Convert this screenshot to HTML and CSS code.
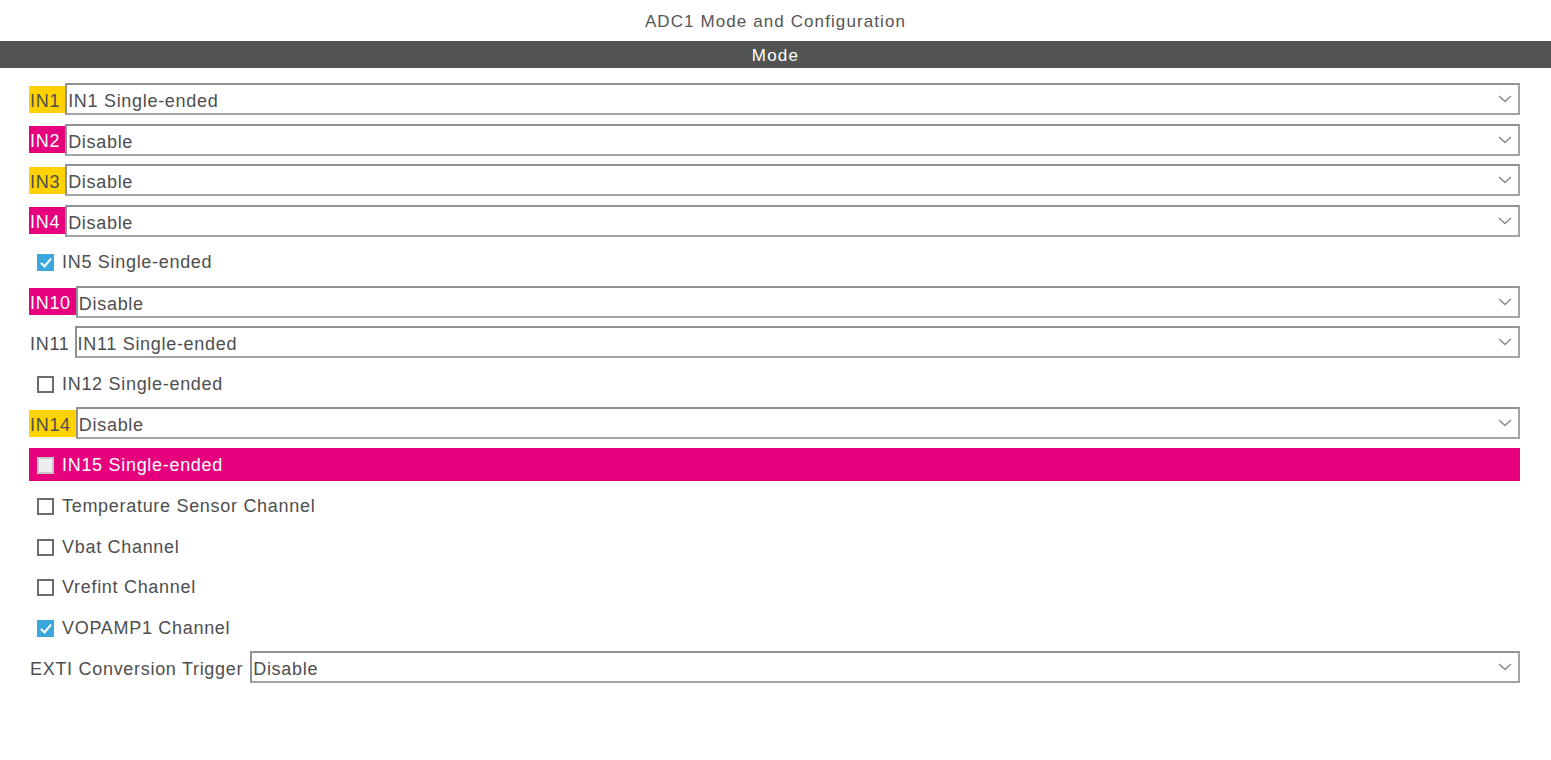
FILE: index.html
```html
<!DOCTYPE html>
<html>
<head>
<meta charset="utf-8">
<link rel="stylesheet" href="styles.css">
</head>
<body>
<div class="title">ADC1 Mode and Configuration</div>
<div class="bar">Mode</div>
<div class="rows">
  <div class="row"><span class="lbl yellow">IN1</span><div class="select">IN1 Single-ended<svg class="chev" width="14" height="8" viewBox="0 0 14 8"><polyline points="1,1 7,6.5 13,1" fill="none" stroke="#8c8c8c" stroke-width="1.6"/></svg></div></div>
  <div class="row"><span class="lbl pink">IN2</span><div class="select">Disable<svg class="chev" width="14" height="8" viewBox="0 0 14 8"><polyline points="1,1 7,6.5 13,1" fill="none" stroke="#8c8c8c" stroke-width="1.6"/></svg></div></div>
  <div class="row"><span class="lbl yellow">IN3</span><div class="select">Disable<svg class="chev" width="14" height="8" viewBox="0 0 14 8"><polyline points="1,1 7,6.5 13,1" fill="none" stroke="#8c8c8c" stroke-width="1.6"/></svg></div></div>
  <div class="row"><span class="lbl pink">IN4</span><div class="select">Disable<svg class="chev" width="14" height="8" viewBox="0 0 14 8"><polyline points="1,1 7,6.5 13,1" fill="none" stroke="#8c8c8c" stroke-width="1.6"/></svg></div></div>
  <div class="row check"><span class="box checked"></span>IN5 Single-ended</div>
  <div class="row"><span class="lbl pink">IN10</span><div class="select">Disable<svg class="chev" width="14" height="8" viewBox="0 0 14 8"><polyline points="1,1 7,6.5 13,1" fill="none" stroke="#8c8c8c" stroke-width="1.6"/></svg></div></div>
  <div class="row"><span class="lbl">IN11</span><div class="select">IN11 Single-ended<svg class="chev" width="14" height="8" viewBox="0 0 14 8"><polyline points="1,1 7,6.5 13,1" fill="none" stroke="#8c8c8c" stroke-width="1.6"/></svg></div></div>
  <div class="row check"><span class="box"></span>IN12 Single-ended</div>
  <div class="row"><span class="lbl yellow">IN14</span><div class="select">Disable<svg class="chev" width="14" height="8" viewBox="0 0 14 8"><polyline points="1,1 7,6.5 13,1" fill="none" stroke="#8c8c8c" stroke-width="1.6"/></svg></div></div>
  <div class="row check hl"><span class="box grey"></span>IN15 Single-ended</div>
  <div class="row check"><span class="box"></span>Temperature Sensor Channel</div>
  <div class="row check"><span class="box"></span>Vbat Channel</div>
  <div class="row check"><span class="box"></span>Vrefint Channel</div>
  <div class="row check"><span class="box checked"></span>VOPAMP1 Channel</div>
  <div class="row"><span class="lbl wide">EXTI Conversion Trigger</span><div class="select">Disable<svg class="chev" width="14" height="8" viewBox="0 0 14 8"><polyline points="1,1 7,6.5 13,1" fill="none" stroke="#8c8c8c" stroke-width="1.6"/></svg></div></div>
</div>
</body>
</html>
```
FILE: styles.css
```css
html, body {
  margin: 0;
  padding: 0;
  background: #ffffff;
}
body {
  font-family: "Liberation Sans", Arial, sans-serif;
  color: #4e4e4e;
  width: 1551px;
  height: 760px;
  overflow: hidden;
}
.title {
  height: 41px;
  box-sizing: border-box;
  padding-top: 2px;
  line-height: 39px;
  text-align: center;
  font-size: 17px;
  letter-spacing: 1.1px;
  color: #555555;
}
.bar {
  height: 27px;
  box-sizing: border-box;
  padding-top: 2px;
  line-height: 25px;
  background: #525452;
  color: #ffffff;
  text-align: center;
  font-size: 17px;
  letter-spacing: 1.2px;
}
.rows {
  display: flex;
  flex-direction: column;
  gap: 8.5px;
  padding: 15px 31px 0 29px;
}
.row {
  height: 32px;
  display: flex;
  align-items: center;
  font-size: 18px;
  letter-spacing: 0.7px;
}
.lbl {
  height: 27px;
  box-sizing: border-box;
  padding: 3px 5px 0 1px;
  line-height: 24px;
  white-space: nowrap;
}
.lbl.wide {
  padding-right: 7px;
}
.yellow {
  background: #ffd200;
}
.pink {
  background: #e6007e;
  color: #ffffff;
}
.select {
  flex: 1;
  height: 32px;
  box-sizing: border-box;
  border: 2px solid #a2a4a6;
  border-top-color: #8f9193;
  border-left-color: #8f9193;
  padding: 2px 0 0 1px;
  line-height: 28px;
  position: relative;
  background: #ffffff;
}
.chev {
  position: absolute;
  right: 6px;
  top: 10px;
}
.check {
  padding-left: 8px;
  padding-top: 3px;
  box-sizing: border-box;
  height: 32px;
}
.box {
  width: 17px;
  height: 17px;
  box-sizing: border-box;
  border: 2px solid #6d6d6d;
  background: #ffffff;
  margin-right: 8px;
  position: relative;
  flex: none;
}
.box.checked {
  border: none;
  background: #3ba7dd;
}
.box.checked::after {
  content: "";
  position: absolute;
  left: 6px;
  top: 2px;
  width: 4px;
  height: 9px;
  border-right: 2px solid #ffffff;
  border-bottom: 2px solid #ffffff;
  transform: rotate(40deg);
}
.box.grey {
  background: #eceef0;
  border-color: #c8c8c8;
}
.hl {
  background: #e6007e;
  color: #ffffff;
  height: 33px;
  padding-top: 2px;
}
```
